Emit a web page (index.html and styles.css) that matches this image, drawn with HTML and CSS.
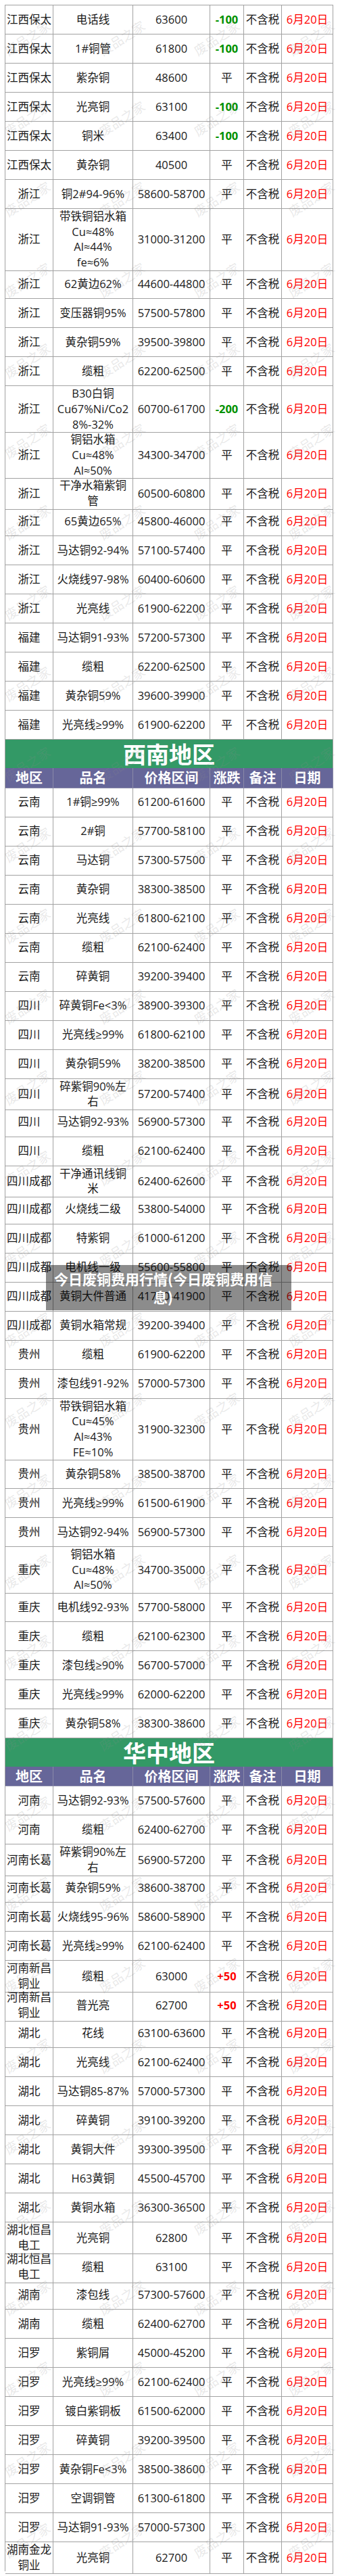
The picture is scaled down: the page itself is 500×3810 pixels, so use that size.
FILE: index.html
```html
<!DOCTYPE html>
<html lang="zh-CN">
<head>
<meta charset="utf-8">
<title>今日废铜费用行情</title>
<link rel="stylesheet" href="styles.css">
</head>
<body>
<div class="page">
  <div class="sheet">
    <div class="row"><div class="c">江西保太</div><div class="c">电话线</div><div class="c">63600</div><div class="c dn">-100</div><div class="c">不含税</div><div class="c dt">6月20日</div></div>
    <div class="row"><div class="c">江西保太</div><div class="c">1#铜管</div><div class="c">61800</div><div class="c dn">-100</div><div class="c">不含税</div><div class="c dt">6月20日</div></div>
    <div class="row"><div class="c">江西保太</div><div class="c">紫杂铜</div><div class="c">48600</div><div class="c">平</div><div class="c">不含税</div><div class="c dt">6月20日</div></div>
    <div class="row"><div class="c">江西保太</div><div class="c">光亮铜</div><div class="c">63100</div><div class="c dn">-100</div><div class="c">不含税</div><div class="c dt">6月20日</div></div>
    <div class="row"><div class="c">江西保太</div><div class="c">铜米</div><div class="c">63400</div><div class="c dn">-100</div><div class="c">不含税</div><div class="c dt">6月20日</div></div>
    <div class="row"><div class="c">江西保太</div><div class="c">黄杂铜</div><div class="c">40500</div><div class="c">平</div><div class="c">不含税</div><div class="c dt">6月20日</div></div>
    <div class="row"><div class="c">浙江</div><div class="c">铜2#94-96%</div><div class="c">58600-58700</div><div class="c">平</div><div class="c">不含税</div><div class="c dt">6月20日</div></div>
    <div class="row r4"><div class="c">浙江</div><div class="c">带铁铜铝水箱<br>Cu≈48%<br>Al≈44%<br>fe≈6%</div><div class="c">31000-31200</div><div class="c">平</div><div class="c">不含税</div><div class="c dt">6月20日</div></div>
    <div class="row"><div class="c">浙江</div><div class="c">62黄边62%</div><div class="c">44600-44800</div><div class="c">平</div><div class="c">不含税</div><div class="c dt">6月20日</div></div>
    <div class="row"><div class="c">浙江</div><div class="c">变压器铜95%</div><div class="c">57500-57800</div><div class="c">平</div><div class="c">不含税</div><div class="c dt">6月20日</div></div>
    <div class="row"><div class="c">浙江</div><div class="c">黄杂铜59%</div><div class="c">39500-39800</div><div class="c">平</div><div class="c">不含税</div><div class="c dt">6月20日</div></div>
    <div class="row"><div class="c">浙江</div><div class="c">缆粗</div><div class="c">62200-62500</div><div class="c">平</div><div class="c">不含税</div><div class="c dt">6月20日</div></div>
    <div class="row r3"><div class="c">浙江</div><div class="c">B30白铜<br>Cu67%Ni/Co2<br>8%-32%</div><div class="c">60700-61700</div><div class="c dn">-200</div><div class="c">不含税</div><div class="c dt">6月20日</div></div>
    <div class="row r3"><div class="c">浙江</div><div class="c">铜铝水箱<br>Cu≈48%<br>Al≈50%</div><div class="c">34300-34700</div><div class="c">平</div><div class="c">不含税</div><div class="c dt">6月20日</div></div>
    <div class="row"><div class="c">浙江</div><div class="c">干净水箱紫铜<br>管</div><div class="c">60500-60800</div><div class="c">平</div><div class="c">不含税</div><div class="c dt">6月20日</div></div>
    <div class="row"><div class="c">浙江</div><div class="c">65黄边65%</div><div class="c">45800-46000</div><div class="c">平</div><div class="c">不含税</div><div class="c dt">6月20日</div></div>
    <div class="row"><div class="c">浙江</div><div class="c">马达铜92-94%</div><div class="c">57100-57400</div><div class="c">平</div><div class="c">不含税</div><div class="c dt">6月20日</div></div>
    <div class="row"><div class="c">浙江</div><div class="c">火烧线97-98%</div><div class="c">60400-60600</div><div class="c">平</div><div class="c">不含税</div><div class="c dt">6月20日</div></div>
    <div class="row"><div class="c">浙江</div><div class="c">光亮线</div><div class="c">61900-62200</div><div class="c">平</div><div class="c">不含税</div><div class="c dt">6月20日</div></div>
    <div class="row"><div class="c">福建</div><div class="c">马达铜91-93%</div><div class="c">57200-57300</div><div class="c">平</div><div class="c">不含税</div><div class="c dt">6月20日</div></div>
    <div class="row"><div class="c">福建</div><div class="c">缆粗</div><div class="c">62200-62500</div><div class="c">平</div><div class="c">不含税</div><div class="c dt">6月20日</div></div>
    <div class="row"><div class="c">福建</div><div class="c">黄杂铜59%</div><div class="c">39600-39900</div><div class="c">平</div><div class="c">不含税</div><div class="c dt">6月20日</div></div>
    <div class="row"><div class="c">福建</div><div class="c">光亮线≥99%</div><div class="c">61900-62200</div><div class="c">平</div><div class="c">不含税</div><div class="c dt">6月20日</div></div>

    <div class="title">西南地区</div>
    <div class="row head"><div class="c">地区</div><div class="c">品名</div><div class="c">价格区间</div><div class="c">涨跌</div><div class="c">备注</div><div class="c">日期</div></div>

    <div class="row"><div class="c">云南</div><div class="c">1#铜≥99%</div><div class="c">61200-61600</div><div class="c">平</div><div class="c">不含税</div><div class="c dt">6月20日</div></div>
    <div class="row"><div class="c">云南</div><div class="c">2#铜</div><div class="c">57700-58100</div><div class="c">平</div><div class="c">不含税</div><div class="c dt">6月20日</div></div>
    <div class="row"><div class="c">云南</div><div class="c">马达铜</div><div class="c">57300-57500</div><div class="c">平</div><div class="c">不含税</div><div class="c dt">6月20日</div></div>
    <div class="row"><div class="c">云南</div><div class="c">黄杂铜</div><div class="c">38300-38500</div><div class="c">平</div><div class="c">不含税</div><div class="c dt">6月20日</div></div>
    <div class="row"><div class="c">云南</div><div class="c">光亮线</div><div class="c">61800-62100</div><div class="c">平</div><div class="c">不含税</div><div class="c dt">6月20日</div></div>
    <div class="row"><div class="c">云南</div><div class="c">缆粗</div><div class="c">62100-62400</div><div class="c">平</div><div class="c">不含税</div><div class="c dt">6月20日</div></div>
    <div class="row"><div class="c">云南</div><div class="c">碎黄铜</div><div class="c">39200-39400</div><div class="c">平</div><div class="c">不含税</div><div class="c dt">6月20日</div></div>
    <div class="row"><div class="c">四川</div><div class="c">碎黄铜Fe&lt;3%</div><div class="c">38900-39300</div><div class="c">平</div><div class="c">不含税</div><div class="c dt">6月20日</div></div>
    <div class="row"><div class="c">四川</div><div class="c">光亮线≥99%</div><div class="c">61800-62100</div><div class="c">平</div><div class="c">不含税</div><div class="c dt">6月20日</div></div>
    <div class="row"><div class="c">四川</div><div class="c">黄杂铜59%</div><div class="c">38200-38500</div><div class="c">平</div><div class="c">不含税</div><div class="c dt">6月20日</div></div>
    <div class="row"><div class="c">四川</div><div class="c">碎紫铜90%左<br>右</div><div class="c">57200-57400</div><div class="c">平</div><div class="c">不含税</div><div class="c dt">6月20日</div></div>
    <div class="row"><div class="c">四川</div><div class="c">马达铜92-93%</div><div class="c">56900-57300</div><div class="c">平</div><div class="c">不含税</div><div class="c dt">6月20日</div></div>
    <div class="row"><div class="c">四川</div><div class="c">缆粗</div><div class="c">62100-62400</div><div class="c">平</div><div class="c">不含税</div><div class="c dt">6月20日</div></div>
    <div class="row"><div class="c">四川成都</div><div class="c">干净通讯线铜<br>米</div><div class="c">62400-62600</div><div class="c">平</div><div class="c">不含税</div><div class="c dt">6月20日</div></div>
    <div class="row"><div class="c">四川成都</div><div class="c">火烧线二级</div><div class="c">53800-54000</div><div class="c">平</div><div class="c">不含税</div><div class="c dt">6月20日</div></div>
    <div class="row"><div class="c">四川成都</div><div class="c">特紫铜</div><div class="c">61000-61200</div><div class="c">平</div><div class="c">不含税</div><div class="c dt">6月20日</div></div>
    <div class="row"><div class="c">四川成都</div><div class="c">电机线一级</div><div class="c">55600-55800</div><div class="c">平</div><div class="c">不含税</div><div class="c dt">6月20日</div></div>
    <div class="row"><div class="c">四川成都</div><div class="c">黄铜大件普通</div><div class="c">41700-41900</div><div class="c">平</div><div class="c">不含税</div><div class="c dt">6月20日</div></div>
    <div class="row"><div class="c">四川成都</div><div class="c">黄铜水箱常规</div><div class="c">39200-39400</div><div class="c">平</div><div class="c">不含税</div><div class="c dt">6月20日</div></div>
    <div class="row"><div class="c">贵州</div><div class="c">缆粗</div><div class="c">61900-62200</div><div class="c">平</div><div class="c">不含税</div><div class="c dt">6月20日</div></div>
    <div class="row"><div class="c">贵州</div><div class="c">漆包线91-92%</div><div class="c">57000-57300</div><div class="c">平</div><div class="c">不含税</div><div class="c dt">6月20日</div></div>
    <div class="row r4"><div class="c">贵州</div><div class="c">带铁铜铝水箱<br>Cu≈45%<br>Al≈43%<br>FE≈10%</div><div class="c">31900-32300</div><div class="c">平</div><div class="c">不含税</div><div class="c dt">6月20日</div></div>
    <div class="row"><div class="c">贵州</div><div class="c">黄杂铜58%</div><div class="c">38500-38700</div><div class="c">平</div><div class="c">不含税</div><div class="c dt">6月20日</div></div>
    <div class="row"><div class="c">贵州</div><div class="c">光亮线≥99%</div><div class="c">61500-61900</div><div class="c">平</div><div class="c">不含税</div><div class="c dt">6月20日</div></div>
    <div class="row"><div class="c">贵州</div><div class="c">马达铜92-94%</div><div class="c">56900-57300</div><div class="c">平</div><div class="c">不含税</div><div class="c dt">6月20日</div></div>
    <div class="row r3"><div class="c">重庆</div><div class="c">铜铝水箱<br>Cu≈48%<br>Al≈50%</div><div class="c">34700-35000</div><div class="c">平</div><div class="c">不含税</div><div class="c dt">6月20日</div></div>
    <div class="row"><div class="c">重庆</div><div class="c">电机线92-93%</div><div class="c">57700-58000</div><div class="c">平</div><div class="c">不含税</div><div class="c dt">6月20日</div></div>
    <div class="row"><div class="c">重庆</div><div class="c">缆粗</div><div class="c">62100-62300</div><div class="c">平</div><div class="c">不含税</div><div class="c dt">6月20日</div></div>
    <div class="row"><div class="c">重庆</div><div class="c">漆包线≥90%</div><div class="c">56700-57000</div><div class="c">平</div><div class="c">不含税</div><div class="c dt">6月20日</div></div>
    <div class="row"><div class="c">重庆</div><div class="c">光亮线≥99%</div><div class="c">62000-62200</div><div class="c">平</div><div class="c">不含税</div><div class="c dt">6月20日</div></div>
    <div class="row"><div class="c">重庆</div><div class="c">黄杂铜58%</div><div class="c">38300-38600</div><div class="c">平</div><div class="c">不含税</div><div class="c dt">6月20日</div></div>

    <div class="title">华中地区</div>
    <div class="row head"><div class="c">地区</div><div class="c">品名</div><div class="c">价格区间</div><div class="c">涨跌</div><div class="c">备注</div><div class="c">日期</div></div>

    <div class="row"><div class="c">河南</div><div class="c">马达铜92-93%</div><div class="c">57500-57600</div><div class="c">平</div><div class="c">不含税</div><div class="c dt">6月20日</div></div>
    <div class="row"><div class="c">河南</div><div class="c">缆粗</div><div class="c">62400-62700</div><div class="c">平</div><div class="c">不含税</div><div class="c dt">6月20日</div></div>
    <div class="row"><div class="c">河南长葛</div><div class="c">碎紫铜90%左<br>右</div><div class="c">56900-57200</div><div class="c">平</div><div class="c">不含税</div><div class="c dt">6月20日</div></div>
    <div class="row"><div class="c">河南长葛</div><div class="c">黄杂铜59%</div><div class="c">38600-38700</div><div class="c">平</div><div class="c">不含税</div><div class="c dt">6月20日</div></div>
    <div class="row"><div class="c">河南长葛</div><div class="c">火烧线95-96%</div><div class="c">58600-58900</div><div class="c">平</div><div class="c">不含税</div><div class="c dt">6月20日</div></div>
    <div class="row"><div class="c">河南长葛</div><div class="c">光亮线≥99%</div><div class="c">62100-62400</div><div class="c">平</div><div class="c">不含税</div><div class="c dt">6月20日</div></div>
    <div class="row"><div class="c">河南新昌<br>铜业</div><div class="c">缆粗</div><div class="c">63000</div><div class="c up">+50</div><div class="c">不含税</div><div class="c dt">6月20日</div></div>
    <div class="row"><div class="c">河南新昌<br>铜业</div><div class="c">普光亮</div><div class="c">62700</div><div class="c up">+50</div><div class="c">不含税</div><div class="c dt">6月20日</div></div>
    <div class="row"><div class="c">湖北</div><div class="c">花线</div><div class="c">63100-63600</div><div class="c">平</div><div class="c">不含税</div><div class="c dt">6月20日</div></div>
    <div class="row"><div class="c">湖北</div><div class="c">光亮线</div><div class="c">62100-62400</div><div class="c">平</div><div class="c">不含税</div><div class="c dt">6月20日</div></div>
    <div class="row"><div class="c">湖北</div><div class="c">马达铜85-87%</div><div class="c">57000-57300</div><div class="c">平</div><div class="c">不含税</div><div class="c dt">6月20日</div></div>
    <div class="row"><div class="c">湖北</div><div class="c">碎黄铜</div><div class="c">39100-39200</div><div class="c">平</div><div class="c">不含税</div><div class="c dt">6月20日</div></div>
    <div class="row"><div class="c">湖北</div><div class="c">黄铜大件</div><div class="c">39300-39500</div><div class="c">平</div><div class="c">不含税</div><div class="c dt">6月20日</div></div>
    <div class="row"><div class="c">湖北</div><div class="c">H63黄铜</div><div class="c">45500-45700</div><div class="c">平</div><div class="c">不含税</div><div class="c dt">6月20日</div></div>
    <div class="row"><div class="c">湖北</div><div class="c">黄铜水箱</div><div class="c">36300-36500</div><div class="c">平</div><div class="c">不含税</div><div class="c dt">6月20日</div></div>
    <div class="row"><div class="c">湖北恒昌<br>电工</div><div class="c">光亮铜</div><div class="c">62800</div><div class="c">平</div><div class="c">不含税</div><div class="c dt">6月20日</div></div>
    <div class="row"><div class="c">湖北恒昌<br>电工</div><div class="c">缆粗</div><div class="c">63100</div><div class="c">平</div><div class="c">不含税</div><div class="c dt">6月20日</div></div>
    <div class="row"><div class="c">湖南</div><div class="c">漆包线</div><div class="c">57300-57600</div><div class="c">平</div><div class="c">不含税</div><div class="c dt">6月20日</div></div>
    <div class="row"><div class="c">湖南</div><div class="c">缆粗</div><div class="c">62400-62700</div><div class="c">平</div><div class="c">不含税</div><div class="c dt">6月20日</div></div>
    <div class="row"><div class="c">汨罗</div><div class="c">紫铜屑</div><div class="c">45000-45200</div><div class="c">平</div><div class="c">不含税</div><div class="c dt">6月20日</div></div>
    <div class="row"><div class="c">汨罗</div><div class="c">光亮线≥99%</div><div class="c">62100-62400</div><div class="c">平</div><div class="c">不含税</div><div class="c dt">6月20日</div></div>
    <div class="row"><div class="c">汨罗</div><div class="c">镀白紫铜板</div><div class="c">61500-62000</div><div class="c">平</div><div class="c">不含税</div><div class="c dt">6月20日</div></div>
    <div class="row"><div class="c">汨罗</div><div class="c">碎黄铜</div><div class="c">39200-39500</div><div class="c">平</div><div class="c">不含税</div><div class="c dt">6月20日</div></div>
    <div class="row"><div class="c">汨罗</div><div class="c">黄杂铜Fe&lt;3%</div><div class="c">38500-38600</div><div class="c">平</div><div class="c">不含税</div><div class="c dt">6月20日</div></div>
    <div class="row"><div class="c">汨罗</div><div class="c">空调铜管</div><div class="c">61300-61800</div><div class="c">平</div><div class="c">不含税</div><div class="c dt">6月20日</div></div>
    <div class="row"><div class="c">汨罗</div><div class="c">马达铜91-93%</div><div class="c">57000-57300</div><div class="c">平</div><div class="c">不含税</div><div class="c dt">6月20日</div></div>
    <div class="row"><div class="c">湖南金龙<br>铜业</div><div class="c">光亮铜</div><div class="c">62700</div><div class="c">平</div><div class="c">不含税</div><div class="c dt">6月20日</div></div>
  </div>

  <div class="wm-layer" aria-hidden="true"><div class="wm-grid"></div></div>

  <div class="banner">今日废铜费用行情(今日废铜费用信<br>息)</div>
</div>
<script src="script.js"></script>
</body>
</html>
```

FILE: styles.css
```css
* { box-sizing: border-box; }

html, body {
  margin: 0;
  padding: 0;
  background: #ffffff;
}

body {
  font-family: "Open Sans", "Noto Sans CJK SC", sans-serif;
  color: #1a1a1a;
}

.page {
  position: relative;
  width: 500px;
  padding: 7px 0 7px 7px;
  overflow: hidden;
}

.sheet {
  width: 486px;
  border-left: 1px solid #a2a2a2;
  border-top: 1px solid #a2a2a2;
}

.row {
  display: grid;
  grid-template-columns: 71px 118px 114px 50px 56px 76px;
  height: 43px;
}

.row.r3 { height: 68px; }
.row.r4 { height: 90.3px; }

.c {
  display: flex;
  align-items: center;
  justify-content: center;
  text-align: center;
  border-right: 1px solid #a2a2a2;
  border-bottom: 1px solid #a2a2a2;
  font-size: 16.5px;
  line-height: 22.7px;
  white-space: nowrap;
  min-width: 0;
}

.dn {
  color: #009100;
  font-weight: 700;
}

.up {
  color: #ff0000;
  font-weight: 700;
}

.dt {
  color: #ff0000;
}

.title {
  height: 42px;
  background: #339966;
  border-right: 1px solid #a2a2a2;
  color: #ffffff;
  font-family: "Noto Sans CJK SC", sans-serif;
  font-weight: 700;
  font-size: 34px;
  line-height: 42px;
  display: flex;
  align-items: center;
  justify-content: center;
}

.row.head { height: 29.3px; }

.head .c {
  background: #666699;
  color: #ffffff;
  font-family: "Noto Sans CJK SC", sans-serif;
  font-weight: 700;
  font-size: 20px;
  line-height: 24px;
  border-right-color: #8a8aa8;
  border-bottom-color: #8a8aa8;
}

.wm-layer {
  position: absolute;
  inset: 0;
  overflow: hidden;
  pointer-events: none;
}

.wm-grid {
  display: grid;
  margin: -4.7px 0 0 -30px;
  grid-template-columns: repeat(4, 140px);
  grid-auto-rows: 119.4px;
}

.wm {
  display: flex;
  align-items: center;
  justify-content: center;
}

.wm span {
  display: block;
  font-family: "Noto Sans CJK SC", sans-serif;
  font-size: 19px;
  line-height: 19px;
  color: rgba(140, 140, 140, 0.2);
  transform: rotate(-33deg);
  white-space: nowrap;
}

.banner {
  position: absolute;
  top: 1871px;
  left: 68px;
  width: 363px;
  padding: 6.5px 24px 6.5px 8px;
  background: rgba(0, 0, 0, 0.45);
  color: #ffffff;
  font-family: "Noto Sans CJK SC", sans-serif;
  font-weight: 700;
  font-size: 21px;
  line-height: 27px;
  text-align: center;
  white-space: nowrap;
}
```

FILE: script.js
```js
(function () {
  var grid = document.querySelector('.wm-grid');
  if (!grid) return;
  for (var i = 0; i < 33 * 4; i++) {
    var cell = document.createElement('div');
    cell.className = 'wm';
    var s = document.createElement('span');
    s.textContent = '废品之家';
    cell.appendChild(s);
    grid.appendChild(cell);
  }
})();
```
